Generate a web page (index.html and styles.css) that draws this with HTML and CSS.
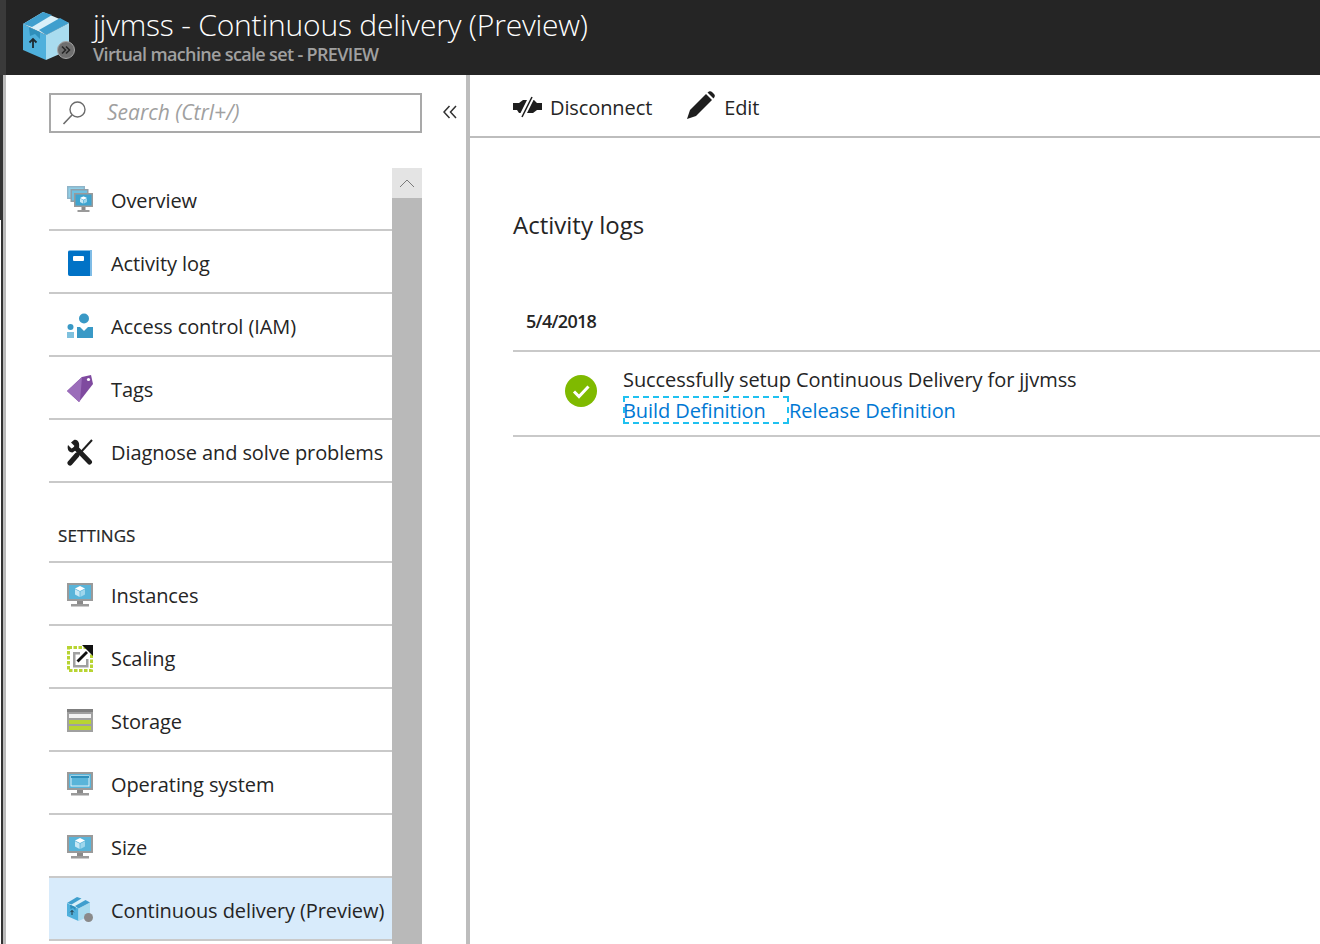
FILE: index.html
```html
<!DOCTYPE html>
<html lang="en">
<head>
<meta charset="utf-8">
<title>jjvmss - Continuous delivery (Preview)</title>
<link rel="stylesheet" href="styles.css">
</head>
<body>
<svg class="defs" width="0" height="0" aria-hidden="true">
  <defs>
    <symbol id="box" viewBox="0 0 46 48">
      <path d="M0 12 23 23V48L0 38Z" fill="#4fb0dc"/>
      <path d="M23 23 46 11V38L23 48Z" fill="#a9dcef"/>
      <path d="M0 12 20 0 46 11 23 23Z" fill="#d9f0f9"/>
      <path d="M0 12 20 0 29 3 9 15Z" fill="#3f9fce"/>
      <path d="M16 18 37 6 46 11 23 23Z" fill="#3f9fce"/>
      <path d="M6 15.500 17 20V27L12 22 7 24Z" fill="#2f8fbb"/>
      <path d="M10 36V27M6.500 30.500 10 27 13.500 30.500" fill="none" stroke="#1e2a30" stroke-width="1.800"/>
    </symbol>
    <symbol id="monitor" viewBox="0 0 26 24">
      <rect x="0" y="0" width="26" height="18" fill="#9a9a9a"/>
      <rect x="2" y="2" width="22" height="14" fill="#59b4d9"/>
      <rect x="10" y="18" width="6" height="3" fill="#8a8a8a"/>
      <rect x="4" y="21" width="18" height="2.500" fill="#9a9a9a"/>
    </symbol>
    <symbol id="cube" viewBox="0 0 10 11">
      <path d="M5 0 10 2.500 5 5 0 2.500Z" fill="#fff"/>
      <path d="M0 3.200 4.600 5.600V11L0 8.500Z" fill="#c8e8f5"/>
      <path d="M10 3.200 5.400 5.600V11L10 8.500Z" fill="#9ed6ec"/>
    </symbol>
  </defs>
</svg>

<header class="title-bar">
  <div class="title-icon">
    <svg class="box-large"><use href="#box"/></svg>
    <svg class="badge-large" viewBox="0 0 18 18">
      <circle cx="9" cy="9" r="8.500" fill="#6f6f6f" stroke="#a5a5a5"/>
      <path d="M5 5.500 8.500 9 5 12.500M9 5.500 12.500 9 9 12.500" fill="none" stroke="#262626" stroke-width="1.600"/>
    </svg>
  </div>
  <div class="title-text">
    <h1 class="title">jjvmss - Continuous delivery (Preview)</h1>
    <div class="subtitle">Virtual machine scale set - PREVIEW</div>
  </div>
</header>

<div class="workspace">
  <aside class="sidebar">
    <div class="search-row">
      <div class="search-box">
        <svg class="search-icon" viewBox="0 0 26 26">
          <circle cx="15.500" cy="9.500" r="7.500" fill="none" stroke="#6b6b6b" stroke-width="1.400"/>
          <path d="M10 15 1.500 24" stroke="#6b6b6b" stroke-width="1.600" fill="none"/>
        </svg>
        <span class="search-text">Search (Ctrl+/)</span>
      </div>
      <svg class="collapse" viewBox="0 0 14 14">
        <path d="M6.500 1 1 7 6.500 13M13 1 7.500 7 13 13" fill="none" stroke="#303030" stroke-width="1.500"/>
      </svg>
    </div>

    <div class="menu-area">
      <nav class="menu">
        <a class="item">
          <svg class="ico" viewBox="0 0 26 28">
            <rect x="0" y="0" width="18" height="13" fill="#8fb4c8"/><rect x="1.500" y="1.500" width="15" height="10" fill="#8fcfe8"/>
            <rect x="3.500" y="3" width="18" height="13" fill="#8f9ea8"/><rect x="5" y="4.500" width="15" height="10" fill="#6fc0e0"/>
            <rect x="7" y="7" width="19" height="14" fill="#9a9a9a"/><rect x="8.500" y="8.500" width="16" height="11" fill="#3fa4cf"/>
            <svg x="13" y="10" width="7" height="8" viewBox="0 0 10 11"><use href="#cube"/></svg>
            <rect x="14.500" y="21" width="4" height="3" fill="#8a8a8a"/><rect x="10.500" y="24" width="12" height="2" fill="#9a9a9a"/>
          </svg>
          <span>Overview</span>
        </a>
        <a class="item">
          <svg class="ico" viewBox="0 0 26 28">
            <path d="M3 1H25V27H4Q1 27 1 24V3Q1 1 3 1Z" fill="#7fbce6"/>
            <path d="M1 3Q1 2 2.500 2H23V27H3Q1 27 1 25Z" fill="#0072c6"/>
            <rect x="6" y="7" width="11" height="5" rx="1" fill="#fff"/>
          </svg>
          <span>Activity log</span>
        </a>
        <a class="item">
          <svg class="ico" viewBox="0 0 26 26">
            <circle cx="17" cy="5.500" r="5" fill="#3999c6"/>
            <circle cx="3.500" cy="14" r="3" fill="#3999c6"/>
            <path d="M10 14H13L17 18 21 14H26V25H10Z" fill="#3999c6"/>
            <path d="M0 19H7V25H0Z" fill="#7fc1de"/>
          </svg>
          <span>Access control (IAM)</span>
        </a>
        <a class="item">
          <svg class="ico" viewBox="0 0 26 28">
            <path d="M0 16 15 2 24 0 26 9 12 27Z" fill="#7f4a9f"/>
            <path d="M0 16 15 2 13 26 12 27Z" fill="#9b6dba"/>
            <circle cx="21.500" cy="4.500" r="1.600" fill="#fff"/>
          </svg>
          <span>Tags</span>
        </a>
        <a class="item">
          <svg class="ico" viewBox="0 0 26 28">
            <path d="M25 2 14 14" stroke="#1e1e1e" stroke-width="2" fill="none"/>
            <path d="M10 17 3 25" stroke="#1e1e1e" stroke-width="5" stroke-linecap="round" fill="none"/>
            <path d="M9 10 22.500 24" stroke="#1e1e1e" stroke-width="5" stroke-linecap="round" fill="none"/>
            <path d="M7 2 4 4.500 8 8.500 4.500 10.500 1 7C0 10 1 14.500 5.500 14.500L12 10C13 5 11 1 7 2Z" fill="#1e1e1e"/>
          </svg>
          <span>Diagnose and solve problems</span>
        </a>

        <div class="section-label">SETTINGS</div>

        <a class="item first-section">
          <svg class="ico" viewBox="0 0 26 24">
            <use href="#monitor"/>
            <svg x="8" y="3" width="10" height="11" viewBox="0 0 10 11"><use href="#cube"/></svg>
          </svg>
          <span>Instances</span>
        </a>
        <a class="item">
          <svg class="ico" viewBox="0 0 26 28">
            <rect x="1.500" y="3.500" width="23" height="23" fill="none" stroke="#b8d432" stroke-width="3" stroke-dasharray="3.500 1.500"/>
            <path d="M6 8H13V10.500H8.500V21H19V15H21.500V23.500H6Z" fill="#a0a0a0"/>
            <path d="M10.500 17.500 20 8" stroke="#111" stroke-width="2.800" fill="none"/>
            <path d="M15 1H26V12Z" fill="#111"/>
          </svg>
          <span>Scaling</span>
        </a>
        <a class="item">
          <svg class="ico" viewBox="0 0 26 24">
            <rect x="0" y="0" width="26" height="23" fill="#a0a0a0"/>
            <rect x="0" y="0" width="26" height="3" fill="#7f7f7f"/>
            <rect x="2" y="5" width="22" height="4" fill="#f2f2f2"/>
            <rect x="2" y="11" width="22" height="4" fill="#b8d432"/>
            <rect x="2" y="17" width="22" height="4" fill="#b8d432"/>
          </svg>
          <span>Storage</span>
        </a>
        <a class="item">
          <svg class="ico" viewBox="0 0 26 24">
            <use href="#monitor"/>
            <rect x="4" y="4" width="18" height="10" fill="#59b4d9" stroke="#fff" stroke-width="0.800"/>
            <rect x="4" y="4" width="18" height="2" fill="#2f8fbb"/>
          </svg>
          <span>Operating system</span>
        </a>
        <a class="item">
          <svg class="ico" viewBox="0 0 26 24">
            <use href="#monitor"/>
            <svg x="8" y="3" width="10" height="11" viewBox="0 0 10 11"><use href="#cube"/></svg>
          </svg>
          <span>Size</span>
        </a>
        <a class="item selected">
          <svg class="ico" viewBox="0 0 26 26">
            <svg x="0" y="0" width="23" height="24" viewBox="0 0 46 48"><use href="#box"/></svg>
            <circle cx="21.500" cy="20.500" r="4.500" fill="#8a8a8a"/>
          </svg>
          <span>Continuous delivery (Preview)</span>
        </a>
      </nav>
      <div class="scrollbar">
        <div class="scroll-up">
          <svg class="scroll-arrow" viewBox="0 0 16 9"><path d="M1 8 8 1 15 8" fill="none" stroke="#7a7a7a" stroke-width="1"/></svg>
        </div>
      </div>
    </div>
  </aside>

  <main class="content">
    <div class="toolbar">
      <div class="tool">
        <svg class="tool-disconnect" viewBox="0 0 29 22">
          <path d="M0 7H6L10 4H14L7.500 17H6L4 14H0Z" fill="#1e1e1e"/>
          <path d="M20.500 4H21L24 7H29V14H24L20 17H14Z" fill="#1e1e1e"/>
          <path d="M9 21 19 1" stroke="#1e1e1e" stroke-width="1.500" fill="none"/>
        </svg>
        <span>Disconnect</span>
      </div>
      <div class="tool">
        <svg class="tool-edit" viewBox="0 0 28 29">
          <path d="M0 28 3 19 19 3 25 9 9 25Z" fill="#1e1e1e"/>
          <path d="M20.500 1.500 22 0.500C23 0 24 0 25 1L27 3C28 4 28 5 27.500 6L26.500 7.500Z" fill="#1e1e1e"/>
        </svg>
        <span>Edit</span>
      </div>
    </div>

    <section class="logs">
      <h2 class="logs-title">Activity logs</h2>
      <div class="log-date">5/4/2018</div>
      <div class="log-row">
        <svg class="check" viewBox="0 0 32 32">
          <circle cx="16" cy="16" r="16" fill="#7fba00"/>
          <path d="M9 16.500 14 21.500 23.500 11.500" fill="none" stroke="#fff" stroke-width="3"/>
        </svg>
        <div class="log-text">
          <div class="log-message">Successfully setup Continuous Delivery for jjvmss</div>
          <div class="log-links">
            <a class="link focused">Build Definition</a><a class="link">Release Definition</a>
          </div>
        </div>
      </div>
    </section>
  </main>
</div>
</body>
</html>
```
FILE: styles.css
```css
* { box-sizing: border-box; }
html, body { height: 100%; }
body {
  margin: 0;
  height: 944px;
  overflow: hidden;
  background: #fff;
  color: #252525;
  font-family: "Open Sans", "Noto Sans", sans-serif;
  display: flex;
  flex-direction: column;
}
.defs { position: absolute; }

.title-bar {
  height: 75px;
  flex: none;
  background: #252525;
  display: flex;
  border-left: 6px solid #3a3a3a;
}
.title-icon { position: relative; width: 87px; flex: none; }
.box-large { position: absolute; left: 17px; top: 12px; width: 46px; height: 48px; }
.badge-large { position: absolute; left: 51px; top: 41px; width: 18px; height: 18px; }
.title-text { padding-top: 6px; }
.title {
  margin: 0;
  font-size: 30px;
  line-height: 38px;
  font-weight: 300;
  color: #fff;
  letter-spacing: -0.2px;
  white-space: nowrap;
}
.subtitle {
  font-size: 18px;
  line-height: 20px;
  font-weight: 600;
  color: #a0a0a0;
  letter-spacing: -0.65px;
  white-space: nowrap;
}

.workspace {
  flex: 1;
  display: flex;
  min-height: 0;
  padding-left: 3px;
  background:
    linear-gradient(90deg, #fff 1px, #333 1px) 0 145px / 3px 100% no-repeat,
    linear-gradient(#333, #333) 0 0 / 3px 145px no-repeat,
    #fff;
}

.sidebar {
  width: 467px;
  flex: none;
  border-left: 3px solid #bbb;
  border-right: 4px solid #bdbdbd;
  padding: 18px 0 0 43px;
  display: flex;
  flex-direction: column;
  min-height: 0;
}
.search-row { display: flex; align-items: center; height: 40px; flex: none; }
.search-box {
  width: 373px;
  height: 40px;
  border: 2px solid #a9a9a9;
  display: flex;
  align-items: center;
  padding-left: 11px;
}
.search-icon { width: 26px; height: 26px; flex: none; }
.search-text {
  margin: -3px 0 0 19px;
  font-size: 21px;
  font-style: italic;
  color: #a0a0a0;
}
.collapse { width: 14px; height: 14px; margin: -2px 0 0 21px; flex: none; }

.menu-area { display: flex; margin-top: 35px; width: 373px; flex: 1; min-height: 0; }
.menu { width: 343px; flex: none; display: flex; flex-direction: column; }
.scrollbar { width: 30px; flex: none; background: #b9b9b9; }
.scroll-up {
  height: 30px;
  background: #e4e4e4;
  display: flex;
  align-items: center;
  justify-content: center;
}
.scroll-arrow { width: 16px; height: 9px; }

.item {
  height: 63px;
  flex: none;
  display: flex;
  align-items: center;
  border-bottom: 2px solid #c9c9c9;
  padding: 3px 0 0 18px;
  font-size: 20px;
  letter-spacing: -0.09px;
  color: #252525;
  white-space: nowrap;
}
.item.first-section { border-top: 2px solid #c9c9c9; height: 65px; }
.item.selected {
  background: #d8ebfb;
  border-top: 2px solid #c9c9c9;
  margin-top: -2px;
  height: 65px;
}
.ico { width: 26px; height: 28px; flex: none; margin-right: 18px; }
.section-label {
  height: 78px;
  flex: none;
  padding: 41px 0 0 9px;
  font-size: 17px;
  line-height: 24px;
  letter-spacing: 0.1px;
  color: #252525;
  -webkit-text-stroke: 0.2px #252525;
}

.content { flex: 1; min-width: 0; display: flex; flex-direction: column; }
.toolbar {
  height: 63px;
  flex: none;
  border-bottom: 2px solid #bdbdbd;
  display: flex;
  align-items: center;
  padding: 3px 0 0 43px;
  gap: 35px;
  font-size: 20px;
  letter-spacing: -0.1px;
}
.tool { display: flex; align-items: center; }
.tool-disconnect { width: 29px; height: 22px; margin-right: 8px; }
.tool-edit { width: 28px; height: 29px; margin: -3px 9px 0 0; }

.logs { padding: 0 0 0 43px; }
.logs-title {
  margin: 71px 0 0;
  font-size: 24px;
  line-height: 32px;
  font-weight: 400;
}
.log-date {
  margin-top: 67px;
  height: 44px;
  padding: 0 0 0 13px;
  font-size: 18px;
  line-height: 26px;
  font-weight: 600;
  letter-spacing: -0.7px;
  border-bottom: 2px solid #c9c9c9;
}
.log-row {
  display: flex;
  height: 85px;
  border-bottom: 2px solid #c9c9c9;
  padding-left: 52px;
}
.check { width: 32px; height: 32px; flex: none; margin: 23px 26px 0 0; }
.log-text { padding-top: 14px; }
.log-message { font-size: 20px; line-height: 28px; letter-spacing: -0.08px; white-space: nowrap; }
.log-links { display: flex; font-size: 20px; line-height: 30px; letter-spacing: -0.08px; margin-top: 2px; }
.link { color: #0078d4; white-space: nowrap; }
.link.focused { width: 166px; height: 28px; outline: 2px dashed #1fc1f0; outline-offset: -2px; }
```
